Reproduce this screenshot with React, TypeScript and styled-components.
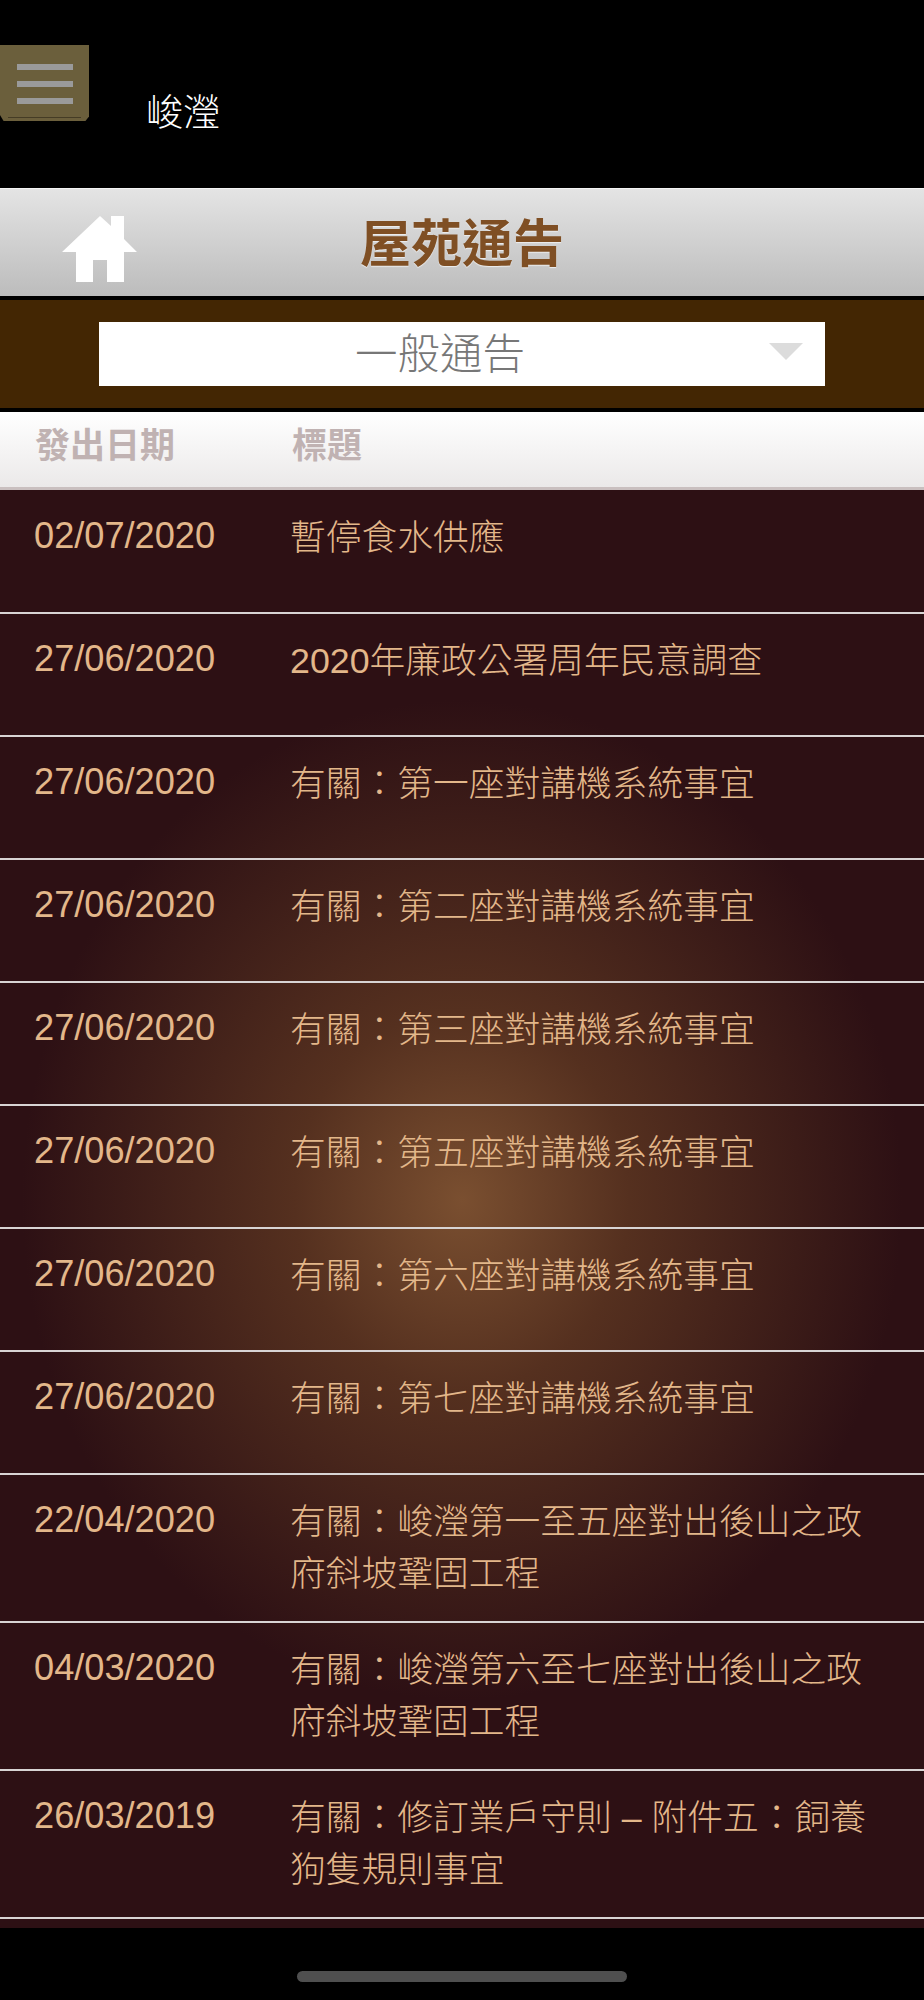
import React from 'react'
import styled, { createGlobalStyle } from 'styled-components'

const FONT = `"Liberation Sans", "Noto Sans CJK TC", sans-serif`

const GlobalStyle = createGlobalStyle`
  html, body {
    margin: 0;
    padding: 0;
    background: #000;
    font-family: ${FONT};
  }
`

const Page = styled.div`
  width: 924px;
  height: 2000px;
  display: flex;
  flex-direction: column;
  background: #000;
  overflow: hidden;
`

const TopBar = styled.header`
  height: 188px;
  display: flex;
  align-items: flex-start;
  gap: 57px;
  flex: none;
`

const MenuButton = styled.button`
  width: 89px;
  height: 76px;
  margin-top: 45px;
  padding: 19px 16px 0 17px;
  display: flex;
  flex-direction: column;
  gap: 11px;
  border: 0;
  background: #6b5f3c;
  clip-path: polygon(0 0, 100% 0, 100% 94%, 96% 100%, 4% 100%, 0 92%);
  position: relative;

  &::after {
    content: '';
    position: absolute;
    left: 8px;
    right: 8px;
    bottom: 3px;
    height: 1px;
    background: #453c25;
  }
`

const MenuLine = styled.span`
  display: block;
  height: 6px;
  background: #9a9a9a;
`

const EstateName = styled.div`
  margin-top: 94px;
  font-size: 37px;
  line-height: 40px;
  font-weight: 300;
  color: #fff;
`

const TitleBand = styled.div`
  height: 108px;
  flex: none;
  position: relative;
  display: flex;
  align-items: center;
  justify-content: center;
  padding-top: 4px;
  border-top: 1px solid #f4f4f4;
  box-sizing: border-box;
  background: linear-gradient(#e4e4e4, #bcbcbc);
`

const HomeLink = styled.a`
  position: absolute;
  left: 62px;
  top: 27px;
  line-height: 0;
`

const Title = styled.h1`
  margin: 0;
  font-size: 51px;
  line-height: 60px;
  font-weight: 700;
  color: #7f4f24;
  text-shadow: 0 1px 1px #eee;
`

const FilterBand = styled.div`
  height: 112px;
  flex: none;
  margin-top: 4px;
  border-bottom: 4px solid #000;
  padding: 22px 99px 0;
  box-sizing: border-box;
  background: #432603;
`

const Select = styled.div`
  height: 64px;
  position: relative;
  display: flex;
  align-items: center;
  justify-content: center;
  padding: 0 44px 7px 0;
  box-sizing: border-box;
  background: #fff;
  font-size: 42.5px;
  font-weight: 300;
  color: #777;
`

const Arrow = styled.span`
  position: absolute;
  right: 22px;
  top: 21px;
  width: 0;
  height: 0;
  border-left: 17px solid transparent;
  border-right: 17px solid transparent;
  border-top: 17px solid #dcdcdc;
`

const HeaderRow = styled.div`
  height: 78px;
  flex: none;
  display: grid;
  grid-template-columns: 257px 1fr;
  padding-left: 35px;
  box-sizing: border-box;
  border-bottom: 3px solid #c9bfbf;
  background: linear-gradient(#ffffff, #ebe9e9);
  font-size: 35px;
  line-height: 67px;
  font-weight: 700;
  color: #c0b2b2;
`

const List = styled.div`
  height: 1438px;
  flex: none;
  padding-top: 1px;
  box-sizing: border-box;
  background: radial-gradient(ellipse 440px 500px at 50% 710px, #7a4f30 0%, #55301f 38%, #2d1014 100%), #2d1014;
`

const Row = styled.div`
  min-height: 123px;
  display: grid;
  grid-template-columns: 256px 595px;
  padding: 19px 0 23px 34px;
  box-sizing: border-box;
  border-bottom: 2px solid #d8d4d4;
  line-height: 52px;
  font-weight: 300;
  color: #e3b78a;
`

const DateCell = styled.span`
  font-size: 36.2px;
`

const TitleCell = styled.span`
  font-size: 35.75px;
  position: relative;
  top: 2px;
`

const HomeBar = styled.div`
  width: 330px;
  height: 11px;
  margin: 43px auto 0;
  flex: none;
  border-radius: 6px;
  background: #4f4f4f;
`

const notices = [
  { date: '02/07/2020', title: '暫停食水供應' },
  { date: '27/06/2020', title: '2020年廉政公署周年民意調查' },
  { date: '27/06/2020', title: '有關：第一座對講機系統事宜' },
  { date: '27/06/2020', title: '有關：第二座對講機系統事宜' },
  { date: '27/06/2020', title: '有關：第三座對講機系統事宜' },
  { date: '27/06/2020', title: '有關：第五座對講機系統事宜' },
  { date: '27/06/2020', title: '有關：第六座對講機系統事宜' },
  { date: '27/06/2020', title: '有關：第七座對講機系統事宜' },
  { date: '22/04/2020', title: '有關：峻瀅第一至五座對出後山之政府斜坡鞏固工程' },
  { date: '04/03/2020', title: '有關：峻瀅第六至七座對出後山之政府斜坡鞏固工程' },
  { date: '26/03/2019', title: '有關：修訂業戶守則 – 附件五：飼養狗隻規則事宜' },
]

const App = () => {
  return (
    <Page>
      <GlobalStyle />
      <TopBar>
        <MenuButton aria-label="menu">
          <MenuLine />
          <MenuLine />
          <MenuLine />
        </MenuButton>
        <EstateName>峻瀅</EstateName>
      </TopBar>
      <TitleBand>
        <HomeLink>
          <svg width="75" height="67" viewBox="0 0 75 67">
            <path fill="#fff" d="M38 0L49 10V0H62V23L75 36H62V66H45V44H31V66H14V36H0Z" />
          </svg>
        </HomeLink>
        <Title>屋苑通告</Title>
      </TitleBand>
      <FilterBand>
        <Select>
          一般通告
          <Arrow />
        </Select>
      </FilterBand>
      <HeaderRow>
        <span>發出日期</span>
        <span>標題</span>
      </HeaderRow>
      <List>
        {notices.map((n, i) => (
          <Row key={i}>
            <DateCell>{n.date}</DateCell>
            <TitleCell>{n.title}</TitleCell>
          </Row>
        ))}
      </List>
      <HomeBar />
    </Page>
  )
}

export default App
